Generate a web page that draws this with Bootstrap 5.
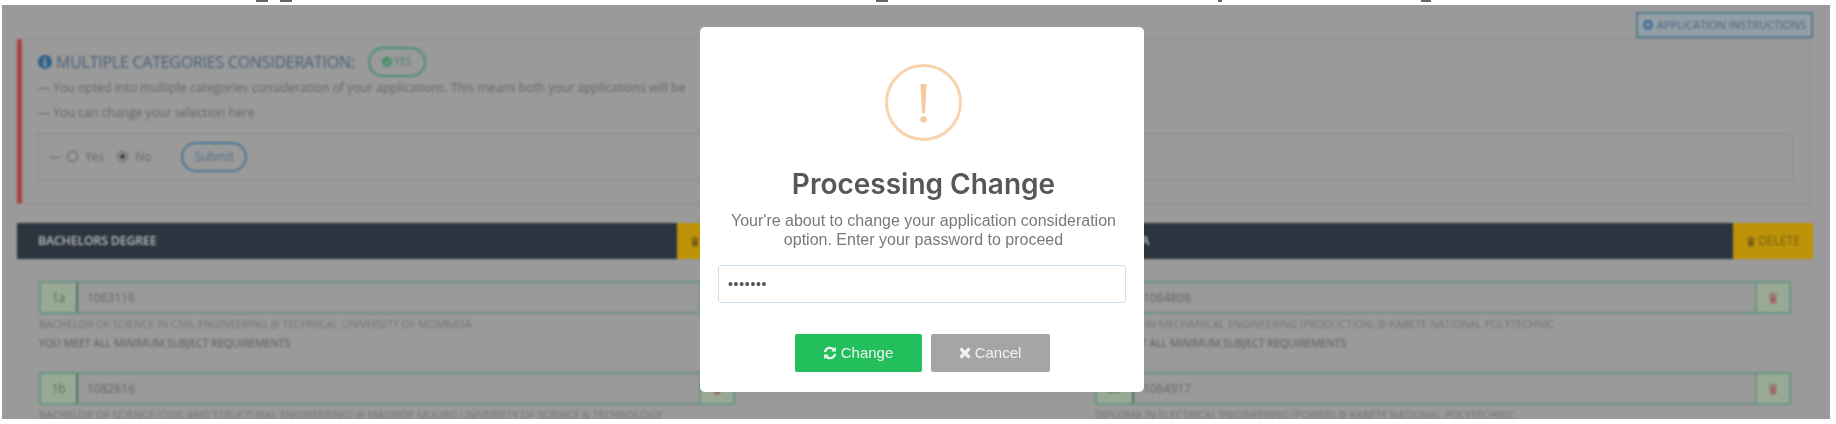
<!DOCTYPE html>
<html lang="en">
<head>
  <meta charset="UTF-8" />
  <title>Processing Change</title>
  <link href="https://cdn.jsdelivr.net/npm/bootstrap@5.3.3/dist/css/bootstrap.min.css" rel="stylesheet" />
  <style>
    body { background: #fff; font-family: "Open Sans", sans-serif; overflow: hidden; }
    .top-strip { height: 5px; }
    .tail { height: 2px; background: #666; }
    .stage { margin: 0 6px 0 2px; height: 414px; background: #9a9a9a; overflow: hidden; position: relative; }
    .page-layer { height: 100%; padding: 7px 19px 0 15px; color: #666; filter: blur(.9px); }
    .btn-instructions { width: 177px; height: 26px; margin: 0 -2px 0 auto; border: 2px solid #557a8c; background: #939fa6; color: #4a6580; font-size: 11px; }
    .info-panel { height: 165px; margin-top: 1px; border: 1px solid #8f8f8f; border-left: 5px solid #a9443d; padding: 7px 17px 0 16px; }
    .info-title { height: 29px; color: #4a6078; font-size: 16px; letter-spacing: -.25px; gap: 13px; }
    .pill-yes { width: 58px; height: 30px; border: 2px solid #4a8f70; border-radius: 15px; color: #4c806a; font-size: 10.5px; gap: 2px; }
    .info-line { font-size: 12.2px; line-height: 26px; height: 26px; margin-top: -1px; }
    .choice-box { height: 47px; margin: 7px 0 0 -1px; border: 1px solid #8e8e8e; padding-left: 11px; font-size: 12px; }
    .fake-radio { width: 11px; height: 11px; border: 1px solid #555; border-radius: 50%; margin: 0 7px 0 6px; }
    .fake-radio-on { background: radial-gradient(#444 35%, #9a9a9a 45%); margin-left: 13px; }
    .btn-submit { width: 66px; height: 30px; margin-left: 30px; border: 2px solid #4c7693; border-radius: 15px; color: #496f8f; font-size: 12px; }
    .choices-wrap { margin: 19px 0 0; gap: 316px; }
    .choice-col { width: 740px; flex: none; }
    .choice-head { height: 36px; background: #2c343f; color: #b9bbbd; font-size: 12.4px; font-weight: 600; padding-left: 21px; letter-spacing: -.2px; }
    .choice-del { width: 80px; height: 100%; background: #bd9309; color: #7a6013; gap: 2px; font-size: 12.4px; font-weight: 400; }
    .pick-list { padding: 22px 22px 0 22px; }
    .pick-group { height: 33px; border: 2px solid #6a9483; font-size: 12px; }
    .pick-code { width: 37px; background: #98aa95; border-right: 2px solid #55705f; color: #5b6b5a; }
    .pick-del { width: 34px; background: #98aa95; border-left: 2px solid #6a9483; color: #a0656a; }
    .pick-num { padding-left: 9px; color: #666; }
    .pick-name { font-size: 10.6px; line-height: 19px; margin-top: 1px; color: #757575; white-space: nowrap; }
    .pick-note { font-size: 10.6px; line-height: 19px; color: #5c5c5c; height: 38px; }
    .swal-box { position: absolute; left: 698px; top: 22px; width: 444px; height: 365px; background: #fff; border-radius: 5px; padding: 37px 15px 0 18px; filter: blur(.5px); }
    .swal-ring { width: 77px; height: 77px; border: 3px solid #f8d3ae; border-radius: 50%; }
    .swal-title { font-family: Inter, sans-serif; font-size: 28px; font-weight: 600; color: #575757; margin: 24px 0 8px; line-height: 38px; }
    .swal-text { font-family: "Liberation Sans", sans-serif; font-size: 16px; line-height: 19px; color: #797979; }
    .swal-input { display: block; width: 408px; height: 38px; margin-top: 16px; border: 1px solid #cfe0ee; border-radius: 3px; padding: 0 9px; font-family: "Liberation Sans", sans-serif; font-size: 14px; letter-spacing: .7px; color: #555; }
    .swal-actions { margin-top: 31px; gap: 9px; padding-right: 3px; }
    .btn-swal { height: 38px; border-radius: 2px; border: 0; color: #eef3ef; font-family: "Liberation Sans", sans-serif; font-size: 15px; gap: 4px; }
    .btn-change { width: 127px; background: #22bf5c; }
    .btn-cancel { width: 119px; background: #a5a5a5; }
  </style>
</head>
<body>

<div class="top-strip d-flex" aria-hidden="true">
  <span class="tail" style="margin-left:256px;width:12px"></span>
  <span class="tail" style="margin-left:12px;width:12px"></span>
  <span class="tail" style="margin-left:584px;width:12px"></span>
  <span class="tail" style="margin-left:330px;width:4px"></span>
  <span class="tail" style="margin-left:199px;width:10px"></span>
</div>

<div class="stage">
  <div class="page-layer">
    <div class="btn-instructions d-flex align-items-center justify-content-center gap-1">
      <svg width="10" height="10" viewBox="0 0 16 16"><circle cx="8" cy="8" r="8" fill="#3f6a92"/><path d="M8 3.5v9M3.5 8h9" stroke="#95a3ab" stroke-width="2.5"/></svg>
      <span>APPLICATION INSTRUCTIONS</span>
    </div>

    <div class="info-panel">
      <div class="info-title d-flex align-items-center">
        <span class="d-flex align-items-center gap-1">
          <svg width="14" height="14" viewBox="0 0 16 16"><circle cx="8" cy="8" r="8" fill="#2f5f88"/><path d="M6.4 3h3v2.2h-3zM6 6.6h3.4v5h1.1v1.6h-4.6v-1.6h1.1V8.2H6z" fill="#9a9a9a"/></svg>
          MULTIPLE CATEGORIES CONSIDERATION:
        </span>
        <span class="pill-yes d-flex align-items-center justify-content-center">
          <svg width="10" height="10" viewBox="0 0 16 16"><circle cx="8" cy="8" r="8" fill="#3f8f68"/><path d="M4 8l3 3 5-5.5" stroke="#9a9a9a" stroke-width="2.4" fill="none"/></svg>
          YES
        </span>
      </div>
      <div class="info-line">— You opted into multiple categories consideration of your applications. This means both your applications will be</div>
      <div class="info-line">— You can change your selection here</div>
      <div class="choice-box d-flex align-items-center">
        <span>—</span>
        <span class="fake-radio"></span><span>Yes</span>
        <span class="fake-radio fake-radio-on"></span><span>No</span>
        <span class="btn-submit d-flex align-items-center justify-content-center">Submit</span>
      </div>
    </div>

    <div class="choices-wrap d-flex">
      <div class="choice-col">
        <div class="choice-head d-flex align-items-center justify-content-between">
          <span>BACHELORS DEGREE</span>
          <span class="choice-del d-flex align-items-center justify-content-center">
            <svg width="10" height="11" viewBox="0 0 12 14"><path d="M1 2.5h10v1.5H1zM4 1h4v1.5H4zM2 5h8l-.6 8.5H2.6z" fill="#7a6013"/></svg>
            DELETE
          </span>
        </div>
        <div class="pick-list">
          <div class="pick-group d-flex align-items-stretch">
            <span class="pick-code d-flex align-items-center justify-content-center">1a</span>
            <span class="pick-num flex-grow-1 d-flex align-items-center">1063116</span>
            <span class="pick-del d-flex align-items-center justify-content-center">
              <svg width="10" height="12" viewBox="0 0 12 14"><path d="M1 2.5h10v1.5H1zM4 1h4v1.5H4zM2 5h8l-.6 8.5H2.6z" fill="#a0656a"/></svg>
            </span>
          </div>
          <div class="pick-name">BACHELOR OF SCIENCE IN CIVIL ENGINEERING @ TECHNICAL UNIVERSITY OF MOMBASA</div>
          <div class="pick-note">YOU MEET ALL MINIMUM SUBJECT REQUIREMENTS</div>
          <div class="pick-group d-flex align-items-stretch">
            <span class="pick-code d-flex align-items-center justify-content-center">1b</span>
            <span class="pick-num flex-grow-1 d-flex align-items-center">1082616</span>
            <span class="pick-del d-flex align-items-center justify-content-center">
              <svg width="10" height="12" viewBox="0 0 12 14"><path d="M1 2.5h10v1.5H1zM4 1h4v1.5H4zM2 5h8l-.6 8.5H2.6z" fill="#a0656a"/></svg>
            </span>
          </div>
          <div class="pick-name">BACHELOR OF SCIENCE (CIVIL AND STRUCTURAL ENGINEERING) @ MASINDE MULIRO UNIVERSITY OF SCIENCE &amp; TECHNOLOGY</div>
        </div>
      </div>

      <div class="choice-col">
        <div class="choice-head d-flex align-items-center justify-content-between">
          <span>DIPLOMA</span>
          <span class="choice-del d-flex align-items-center justify-content-center">
            <svg width="10" height="11" viewBox="0 0 12 14"><path d="M1 2.5h10v1.5H1zM4 1h4v1.5H4zM2 5h8l-.6 8.5H2.6z" fill="#7a6013"/></svg>
            DELETE
          </span>
        </div>
        <div class="pick-list">
          <div class="pick-group d-flex align-items-stretch">
            <span class="pick-code d-flex align-items-center justify-content-center">2a</span>
            <span class="pick-num flex-grow-1 d-flex align-items-center">1064808</span>
            <span class="pick-del d-flex align-items-center justify-content-center">
              <svg width="10" height="12" viewBox="0 0 12 14"><path d="M1 2.5h10v1.5H1zM4 1h4v1.5H4zM2 5h8l-.6 8.5H2.6z" fill="#a0656a"/></svg>
            </span>
          </div>
          <div class="pick-name">DIPLOMA IN MECHANICAL ENGINEERING (PRODUCTION) @ KABETE NATIONAL POLYTECHNIC</div>
          <div class="pick-note">YOU MEET ALL MINIMUM SUBJECT REQUIREMENTS</div>
          <div class="pick-group d-flex align-items-stretch">
            <span class="pick-code d-flex align-items-center justify-content-center">2b</span>
            <span class="pick-num flex-grow-1 d-flex align-items-center">1064917</span>
            <span class="pick-del d-flex align-items-center justify-content-center">
              <svg width="10" height="12" viewBox="0 0 12 14"><path d="M1 2.5h10v1.5H1zM4 1h4v1.5H4zM2 5h8l-.6 8.5H2.6z" fill="#a0656a"/></svg>
            </span>
          </div>
          <div class="pick-name">DIPLOMA IN ELECTRICAL ENGINEERING (POWER) @ KABETE NATIONAL POLYTECHNIC</div>
        </div>
      </div>
    </div>
  </div>

  <div class="swal-box text-center">
    <div class="swal-ring d-flex align-items-center justify-content-center mx-auto">
      <svg width="7" height="40" viewBox="0 0 7 40"><path d="M.4 1h6.2L5 30H2z" fill="#f8c9a0"/><circle cx="3.5" cy="36.5" r="3.2" fill="#f8c9a0"/></svg>
    </div>
    <h2 class="swal-title">Processing Change</h2>
    <p class="swal-text m-0">Your're about to change your application consideration<br />option. Enter your password to proceed</p>
    <input class="swal-input" type="password" value="1234567" />
    <div class="swal-actions d-flex justify-content-center">
      <button type="button" class="btn btn-swal btn-change d-flex align-items-center justify-content-center">
        <svg width="14" height="14" viewBox="0 0 16 16" fill="none" stroke="#eef3ef" stroke-width="2.6"><path d="M2.2 7A6 6 0 0 1 13 4.6"/><path d="M13.8 9A6 6 0 0 1 3 11.4"/><path d="M14.8 1v5.4H9.4z" fill="#eef3ef" stroke="none"/><path d="M1.2 15V9.6h5.4z" fill="#eef3ef" stroke="none"/></svg>
        Change
      </button>
      <button type="button" class="btn btn-swal btn-cancel d-flex align-items-center justify-content-center">
        <svg width="12" height="12" viewBox="0 0 12 12" stroke="#eef3ef" stroke-width="3.2"><path d="M1.5 1.5l9 9M10.5 1.5l-9 9"/></svg>
        Cancel
      </button>
    </div>
  </div>
</div>

<script src="https://cdn.jsdelivr.net/npm/bootstrap@5.3.3/dist/js/bootstrap.bundle.min.js"></script>
</body>
</html>
